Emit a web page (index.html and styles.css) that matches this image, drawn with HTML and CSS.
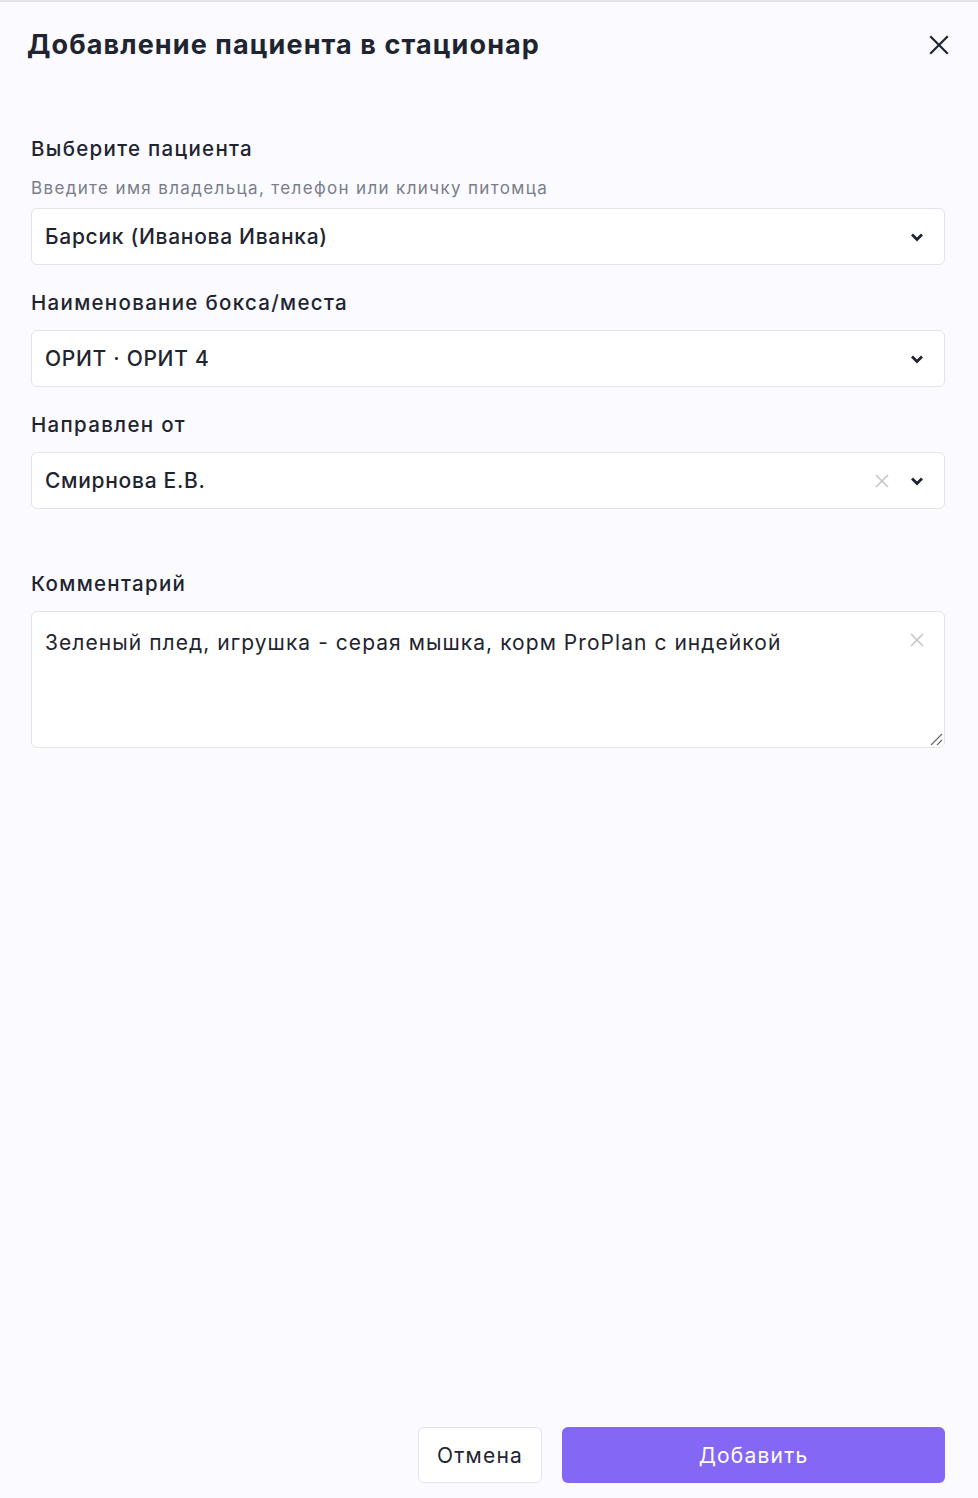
FILE: index.html
```html
<!DOCTYPE html>
<html lang="ru">
<head>
<meta charset="utf-8">
<title>Добавление пациента в стационар</title>
<link rel="stylesheet" href="styles.css">
</head>
<body>
<div class="modal">
  <header class="header">
    <h1 class="title">Добавление пациента в стационар</h1>
    <button class="close" aria-label="Закрыть">
      <svg width="20" height="20" viewBox="0 0 20 20"><path d="M2 2L18 18M18 2L2 18" stroke="#1f2530" stroke-width="2.2" stroke-linecap="square" fill="none"/></svg>
    </button>
  </header>

  <main class="form">
    <div class="field">
      <div class="label">Выберите пациента</div>
      <div class="hint">Введите имя владельца, телефон или кличку питомца</div>
      <div class="select">
        <span class="value">Барсик (Иванова Иванка)</span>
        <span class="icons">
          <svg class="chev" width="14" height="10" viewBox="0 0 14 10"><path d="M2 2.5L7 7.5L12 2.5" stroke="#1f2530" stroke-width="2.8" fill="none"/></svg>
        </span>
      </div>
    </div>

    <div class="field">
      <div class="label">Наименование бокса/места</div>
      <div class="select">
        <span class="value">ОРИТ · ОРИТ 4</span>
        <span class="icons">
          <svg class="chev" width="14" height="10" viewBox="0 0 14 10"><path d="M2 2.5L7 7.5L12 2.5" stroke="#1f2530" stroke-width="2.8" fill="none"/></svg>
        </span>
      </div>
    </div>

    <div class="field">
      <div class="label">Направлен от</div>
      <div class="select">
        <span class="value">Смирнова Е.В.</span>
        <span class="icons">
          <svg class="clear" width="16" height="16" viewBox="0 0 16 16"><path d="M2 2L14 14M14 2L2 14" stroke="#c4c4d0" stroke-width="1.6" fill="none"/></svg>
          <svg class="chev" width="14" height="10" viewBox="0 0 14 10"><path d="M2 2.5L7 7.5L12 2.5" stroke="#1f2530" stroke-width="2.8" fill="none"/></svg>
        </span>
      </div>
    </div>

    <div class="field field-comment">
      <div class="label">Комментарий</div>
      <div class="textarea">
        <span class="value text">Зеленый плед, игрушка - серая мышка, корм ProPlan с индейкой</span>
        <svg class="clear ta-clear" width="16" height="16" viewBox="0 0 16 16"><path d="M2 2L14 14M14 2L2 14" stroke="#c4c4d0" stroke-width="1.6" fill="none"/></svg>
        <svg class="grip" width="14" height="14" viewBox="0 0 14 14"><path d="M13 2L2 13M13 8L8 13" stroke="#6b6b6b" stroke-width="1.2" fill="none"/></svg>
      </div>
    </div>
  </main>

  <footer class="footer">
    <button class="btn btn-cancel">Отмена</button>
    <button class="btn btn-primary">Добавить</button>
  </footer>
</div>
</body>
</html>
```
FILE: styles.css
```css
* { box-sizing: border-box; }

html, body {
  margin: 0;
  padding: 0;
  background: #fafaff;
}

body {
  font-family: Inter, "Noto Sans", "Liberation Sans", sans-serif;
  color: #1f2530;
}

.modal {
  min-height: 1498px;
  display: flex;
  flex-direction: column;
  border-top: 2px solid #e4e4e7;
  background: #fafaff;
}

.header {
  display: flex;
  justify-content: space-between;
  align-items: center;
  padding: 25px 28px 0 27px;
}

.title {
  margin: 0;
  font-size: 27px;
  line-height: 36px;
  font-weight: 700;
  letter-spacing: 1.1px;
  color: #1f2530;
}

.close {
  border: 0;
  background: none;
  padding: 0;
  width: 22px;
  height: 22px;
  display: flex;
  align-items: center;
  justify-content: center;
}

.form {
  flex: 1;
  padding: 72px 33px 0 31px;
  display: flex;
  flex-direction: column;
}

.field {
  display: flex;
  flex-direction: column;
  margin-bottom: 24px;
}

.field-comment {
  margin-top: 37px;
}

.label {
  font-size: 20.5px;
  line-height: 28px;
  font-weight: 500;
  letter-spacing: 1.3px;
  color: #1f2530;
  margin-bottom: 13px;
}

.field:first-child .label {
  margin-bottom: 0;
}

.hint {
  font-size: 17px;
  line-height: 24px;
  letter-spacing: 1.35px;
  color: #7a7e89;
  margin-top: 13px;
  margin-bottom: 8px;
}

.select {
  height: 57px;
  background: #ffffff;
  border: 1px solid #e3e3eb;
  border-radius: 6px;
  display: flex;
  align-items: center;
  justify-content: space-between;
  padding: 0 20px 0 13px;
}

.value {
  font-size: 21px;
  font-weight: 500;
  letter-spacing: 0.7px;
  color: #1f2530;
}

.value.text {
  font-weight: 400;
  letter-spacing: 1.05px;
}

.icons {
  display: flex;
  align-items: center;
  gap: 20px;
}

.chev { display: block; }
.clear { display: block; }

.textarea {
  position: relative;
  height: 137px;
  background: #ffffff;
  border: 1px solid #e3e3eb;
  border-radius: 6px;
  padding: 18px 60px 0 13px;
}

.ta-clear {
  position: absolute;
  top: 20px;
  right: 19px;
}

.grip {
  position: absolute;
  right: 1px;
  bottom: 1px;
}

.footer {
  display: flex;
  justify-content: flex-end;
  gap: 20px;
  padding: 0 33px 15px 0;
}

.btn {
  height: 56px;
  border-radius: 6px;
  font-family: inherit;
  font-size: 21px;
  font-weight: 400;
  letter-spacing: 1.2px;
  cursor: pointer;
}

.btn-cancel {
  width: 124px;
  background: #ffffff;
  border: 1px solid #e3e3eb;
  color: #1f2530;
}

.btn-primary {
  width: 383px;
  background: #8567f6;
  border: 0;
  color: #ffffff;
}
```
